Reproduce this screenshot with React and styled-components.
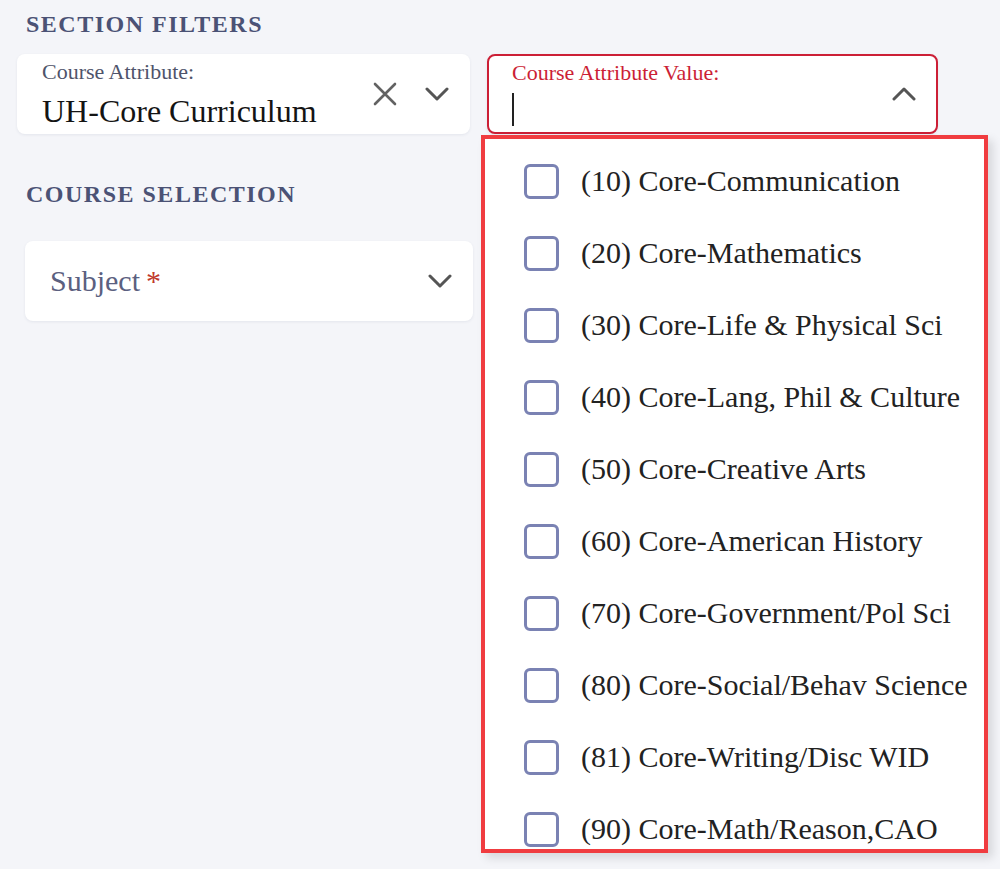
import React from 'react';
import styled, { createGlobalStyle } from 'styled-components';

const GlobalStyle = createGlobalStyle`
  * { box-sizing: border-box; }
  html, body {
    margin: 0;
    padding: 0;
    background: #f4f5f9;
    font-family: 'Liberation Serif', 'Times New Roman', serif;
  }
`;

const Page = styled.div`
  width: 1000px;
  height: 869px;
  overflow: hidden;
  padding: 10px 17px 0;
`;

const SectionTitle = styled.h2`
  margin: ${p => p.top || 0}px 0 0 9px;
  font-size: 24px;
  line-height: 28px;
  font-weight: 700;
  letter-spacing: 1.5px;
  color: #4b5275;
`;

const FilterRow = styled.div`
  display: flex;
  gap: 17px;
  margin-top: 16px;
`;

const Field = styled.div`
  position: relative;
  width: ${p => p.width}px;
  height: 80px;
  background: #fff;
  border-radius: 8px;
  border: ${p => (p.active ? '2px solid #cc1f36' : '1px solid transparent')};
  box-shadow: 0 1px 3px rgba(40, 50, 90, 0.08);
  display: flex;
  align-items: center;
  padding: 0 20px 0 ${p => (p.active ? 23 : 24)}px;
`;

const FieldBody = styled.div`
  flex: 1;
  align-self: stretch;
  padding-top: 5px;
`;

const Label = styled.div`
  font-size: 22px;
  line-height: 24px;
  color: ${p => (p.active ? '#cc1f36' : '#4f546b')};
`;

const Value = styled.div`
  margin-top: 9px;
  font-size: 32px;
  line-height: 36px;
  color: #141414;
`;

const Caret = styled.div`
  margin-top: 8px;
  width: 2px;
  height: 33px;
  background: #222;
`;

const Placeholder = styled.div`
  flex: 1;
  font-size: 30px;
  color: #5b6080;
  span {
    color: #c0392b;
    margin-left: 6px;
  }
`;

const Icons = styled.div`
  display: flex;
  align-items: center;
  gap: 28px;
`;

const Menu = styled.div`
  position: absolute;
  top: calc(100% + 3px);
  left: -8px;
  width: 507px;
  height: 718px;
  background: #fff;
  border: 4px solid #f03c40;
  box-shadow: 5px 5px 9px rgba(0, 0, 0, 0.12);
  overflow: hidden;
  padding-top: 6px;
  z-index: 5;
`;

const Option = styled.label`
  display: flex;
  align-items: center;
  height: 72px;
  padding-left: 39px;
  gap: 22px;
  font-size: 30px;
  color: #222;
`;

const Box = styled.span`
  flex: none;
  width: 35px;
  height: 35px;
  border: 3px solid #7a82b3;
  border-radius: 6px;
`;

const SubjectCard = styled(Field)`
  margin: 33px 0 0 8px;
`;

const CloseIcon = () => (
  <svg width="24" height="24" viewBox="0 0 24 24" fill="none" stroke="#626262" strokeWidth="2.6" strokeLinecap="round">
    <path d="M2 2L22 22M22 2L2 22" />
  </svg>
);

const Chevron = ({ up }) => (
  <svg width="24" height="14" viewBox="0 0 24 14" fill="none" stroke="#555" strokeWidth="3" strokeLinecap="round" strokeLinejoin="round">
    <path d={up ? 'M2 12L12 2L22 12' : 'M2 2L12 12L22 2'} />
  </svg>
);

const options = [
  '(10) Core-Communication',
  '(20) Core-Mathematics',
  '(30) Core-Life & Physical Sci',
  '(40) Core-Lang, Phil & Culture',
  '(50) Core-Creative Arts',
  '(60) Core-American History',
  '(70) Core-Government/Pol Sci',
  '(80) Core-Social/Behav Science',
  '(81) Core-Writing/Disc WID',
  '(90) Core-Math/Reason,CAO',
];

export default function App() {
  return (
    <Page>
      <GlobalStyle />
      <SectionTitle>SECTION FILTERS</SectionTitle>
      <FilterRow>
        <Field width={453}>
          <FieldBody>
            <Label>Course Attribute:</Label>
            <Value>UH-Core Curriculum</Value>
          </FieldBody>
          <Icons>
            <CloseIcon />
            <Chevron />
          </Icons>
        </Field>
        <Field width={451} active>
          <FieldBody>
            <Label active>Course Attribute Value:</Label>
            <Caret />
          </FieldBody>
          <Chevron up />
          <Menu>
            {options.map(o => (
              <Option key={o}>
                <Box />
                {o}
              </Option>
            ))}
          </Menu>
        </Field>
      </FilterRow>
      <SectionTitle top={46}>COURSE SELECTION</SectionTitle>
      <SubjectCard width={448}>
        <Placeholder>
          Subject<span>*</span>
        </Placeholder>
        <Chevron />
      </SubjectCard>
    </Page>
  );
}
